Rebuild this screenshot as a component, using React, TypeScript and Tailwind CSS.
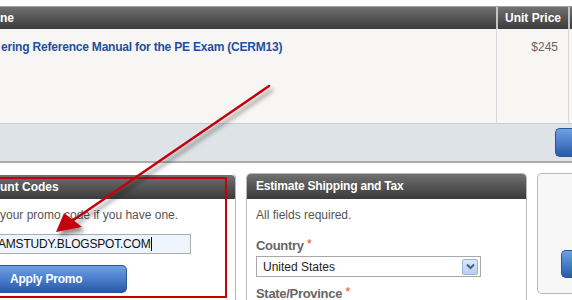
import React from "react";

const blueBtn =
  "bg-gradient-to-b from-[#6fa0e2] via-[#4a7ecb] to-[#2a58a6] border border-[#2a5599]";
const darkHead = "bg-gradient-to-b from-[#717171] to-[#3b3b3b]";

export default function App() {
  return (
    <div className="relative h-[300px] w-[572px] overflow-hidden bg-white font-['Liberation_Sans',Arial,sans-serif]">
      {/* cart table */}
      <div className="h-[6px]" />
      <div className="h-px bg-[#a3a3a3]" />
      <div className={`flex h-[22px] ${darkHead} text-[12px] font-bold leading-[22px] text-white`}>
        <div className="w-[496px]">ne</div>
        <div className="w-[2px] bg-[#c4c4c4]" />
        <div className="w-[70px] text-center">Unit Price</div>
        <div className="w-[2px] bg-[#c4c4c4]" />
        <div className="flex-1" />
      </div>
      <div className="flex h-[94px] bg-[#f7f6f4]">
        <div className="w-[496px] pt-[11px] pl-px text-[12px] font-bold leading-[15px] tracking-[-0.2px] text-[#1f4fa0]">
          ering Reference Manual for the PE Exam (CERM13)
        </div>
        <div className="w-[72px] border-l border-[#d8d8dc] pt-[11px] pr-[10px] text-right text-[12px] leading-[15px] text-[#666]">
          $245
        </div>
        <div className="flex-1 border-l border-[#d8d8dc]" />
      </div>
      <div className="h-px bg-[#c9ced2]" />
      <div className="flex h-[37px] justify-end bg-[#dde3e6] pt-[4px]">
        <div className={`h-[29px] w-[17px] rounded-l-[5px] border-r-0 ${blueBtn}`} />
      </div>
      <div className="h-[2px] bg-[#ababab]" />

      {/* panels */}
      <div className="mt-[10px] flex items-start">
        {/* discount codes */}
        <div className="h-[140px] w-[236px] rounded-tr-[5px] border-r border-[#b8b8b8]">
          <div className={`mt-[2px] h-[24px] rounded-tr-[4px] ${darkHead} text-[12px] font-bold leading-[24px] text-white`}>
            unt Codes
          </div>
          <div className="pt-[9px] text-[12px] leading-[15px] text-[#555]">
            your promo code if you have one.
          </div>
          <div className="mt-[11px] flex h-[20px] w-[191px] items-center border border-l-0 border-[#adadad] bg-[#eef5fd] text-[12px] tracking-[-0.2px] text-[#111]">
            <span className="-ml-[2px]">AMSTUDY.BLOGSPOT.COM</span>
            <span className="ml-px h-[14px] w-px bg-black" />
          </div>
          <div
            className={`mt-[11px] h-[28px] w-[127px] rounded-r-[5px] border-l-0 ${blueBtn} pl-[10px] text-[12px] font-bold leading-[26px] tracking-[-0.2px] text-white`}
          >
            Apply Promo
          </div>
        </div>

        {/* shipping */}
        <div className="ml-[10px] h-[140px] w-[281px] rounded-t-[5px] border border-b-0 border-[#b8b8b8]">
          <div className={`h-[25px] rounded-t-[4px] ${darkHead} px-[9px] text-[12px] font-bold leading-[25px] tracking-[-0.2px] text-white`}>
            Estimate Shipping and Tax
          </div>
          <div className="px-[9px]">
            <div className="pt-[9px] text-[12px] leading-[15px] text-[#555]">All fields required.</div>
            <div className="mt-[15px] text-[13px] font-bold leading-[16px] tracking-[-0.3px] text-[#666]">
              Country<span className="relative -top-[2px] ml-[3px] font-normal text-[#e5532d]">*</span>
            </div>
            <div className="mt-[2px] flex h-[21px] w-[225px] items-center justify-between border border-[#a9a9a9] pl-[6px] pr-[2px] text-[12px] text-[#222]">
              <span>United States</span>
              <div className="flex h-[16px] w-[16px] items-center justify-center rounded-[2px] border border-[#9ab3da] bg-gradient-to-b from-[#dbe8fc] to-[#b8cff3]">
                <svg width="9" height="7" viewBox="0 0 9 7">
                  <path d="M1 1.5 L4.5 5 L8 1.5" fill="none" stroke="#4d5d7c" strokeWidth="2" />
                </svg>
              </div>
            </div>
            <div className="mt-[9px] text-[13px] font-bold leading-[16px] tracking-[-0.3px] text-[#666]">
              State/Province<span className="relative -top-[2px] ml-[3px] font-normal text-[#e5532d]">*</span>
            </div>
          </div>
        </div>

        {/* right panel */}
        <div className="ml-[10px] h-[121px] flex-1 rounded-l-[5px] border border-r-0 border-[#b8b8b8] bg-[#f7f7f7] pt-[76px] pl-[23px]">
          <div className={`h-[28px] rounded-l-[5px] border-r-0 ${blueBtn}`} />
        </div>
      </div>

      {/* annotation: red box */}
      <div className="pointer-events-none absolute left-[-10px] top-[177px] h-[121px] w-[237px] border-2 border-[#c4000c]" />

      {/* annotation: arrow */}
      <svg className="pointer-events-none absolute left-0 top-0" width="572" height="300" viewBox="0 0 572 300">
        <defs>
          <filter id="sh" x="-20%" y="-20%" width="140%" height="140%">
            <feDropShadow dx="3" dy="4" stdDeviation="2" floodColor="#000" floodOpacity="0.45" />
          </filter>
        </defs>
        <g filter="url(#sh)">
          <line x1="269" y1="86" x2="72" y2="221" stroke="#c4000c" strokeWidth="2.5" strokeLinecap="round" />
          <polygon points="56,232 64,213 82,227" fill="#c4000c" />
        </g>
      </svg>
    </div>
  );
}
